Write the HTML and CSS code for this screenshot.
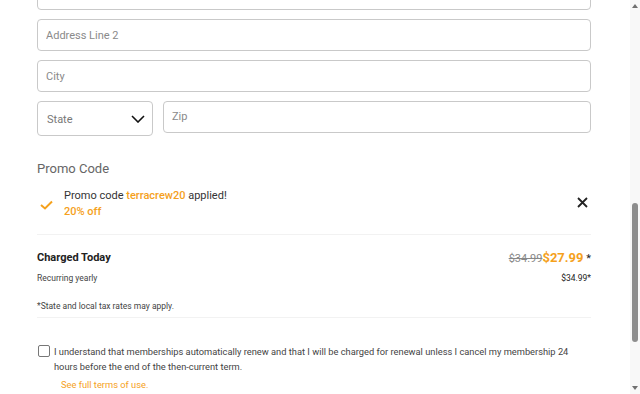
FILE: index.html
```html
<!DOCTYPE html>
<html lang="en">
<head>
    <meta charset="UTF-8">
    <meta name="viewport" content="width=device-width, initial-scale=1.0">
    <title>Checkout</title>
    <link rel="stylesheet" href="styles.css">
</head>
<body>
    <div id="page">
        <div id="checkout-form">
            <div class="field"><input type="text" class="text-input" placeholder="Address Line 1"></div>
            <div class="field"><input type="text" class="text-input" placeholder="Address Line 2"></div>
            <div class="field"><input type="text" class="text-input" placeholder="City"></div>
            <div class="field field-row">
                <div class="state-select">
                    <span>State</span>
                    <svg width="14" height="8" viewBox="0 0 14 8"><path d="M1 1l6 6 6-6" fill="none" stroke="#111" stroke-width="1.6"/></svg>
                </div>
                <input type="text" class="text-input zip-input" placeholder="Zip">
            </div>

            <div class="promo-title">Promo Code</div>
            <div class="promo-applied">
                <svg class="promo-check" width="13" height="10" viewBox="0 0 13 10"><path d="M1 5l4 3.5L12 1.5" fill="none" stroke="#f5a11c" stroke-width="2"/></svg>
                <div class="promo-text">
                    <div>Promo code <span class="accent">terracrew20</span> applied!</div>
                    <div class="accent">20% off</div>
                </div>
                <svg class="promo-remove" width="11" height="11" viewBox="0 0 11 11"><path d="M1 1l9 9M10 1l-9 9" fill="none" stroke="#222" stroke-width="1.8"/></svg>
            </div>

            <div class="summary">
                <div class="summary-row">
                    <div class="charged-title">Charged Today</div>
                    <div class="price"><span class="old-price">$34.99</span><span class="new-price">$27.99</span> *</div>
                </div>
                <div class="summary-row small-row">
                    <div>Recurring yearly</div>
                    <div class="renew-price">$34.99*</div>
                </div>
                <div class="tax-note">*State and local tax rates may apply.</div>
            </div>

            <div class="terms">
                <span class="checkbox"></span>
                <div class="terms-text">
                    I understand that memberships automatically renew and that I will be charged for renewal unless I cancel my membership 24 hours before the end of the then-current term.
                    <div class="terms-link">See full terms of use.</div>
                </div>
            </div>
        </div>
        <div id="scrollbar">
            <span class="arrow-up"></span>
            <span class="thumb"></span>
            <span class="arrow-down"></span>
        </div>
    </div>
</body>
</html>
```

FILE: styles.css
```css
html, body {
    margin: 0;
    padding: 0;
    height: 100%;
    overflow: hidden;
}
body {
    background-color: white;
    color: #333;
    font-family: Roboto, "Liberation Sans", sans-serif;
}
#page {
    position: relative;
    height: 394px;
    overflow: hidden;
}
#checkout-form {
    width: 554px;
    margin: -22px 0 0 37px;
}
.field {
    margin-bottom: 9px;
}
.field-row {
    display: flex;
    align-items: flex-start;
    gap: 10px;
}
.text-input {
    display: block;
    box-sizing: border-box;
    width: 100%;
    height: 32px;
    border: 1px solid #c9c9c9;
    border-radius: 4px;
    padding: 0 8px;
    font-family: inherit;
    font-size: 11px;
    color: #333;
    outline: none;
}
.text-input::placeholder {
    color: #8a8a8a;
}
.zip-input {
    flex: 1;
    padding-bottom: 1px;
}
.state-select {
    box-sizing: border-box;
    width: 116px;
    height: 35px;
    border: 1px solid #c9c9c9;
    border-radius: 4px;
    padding: 0 7px 0 9px;
    display: flex;
    align-items: center;
    justify-content: space-between;
    font-size: 11px;
    color: #777;
}
.state-select span {
    padding-top: 1px;
}
.promo-title {
    margin-top: 25px;
    font-size: 13px;
    color: #666;
}
.promo-applied {
    display: flex;
    align-items: center;
    padding: 12px 3px 14px 3px;
    border-bottom: 1px solid #f2f2f2;
}
.promo-check {
    margin-right: 11px;
    margin-top: 2px;
}
.promo-text {
    flex: 1;
    font-size: 11px;
    line-height: 16px;
    color: #333;
}
.accent {
    color: #f5a11c;
    font-weight: 500;
}
.promo-remove {
    margin-top: -3px;
}
.summary {
    padding: 15px 0 6px;
    border-bottom: 1px solid #f2f2f2;
}
.summary-row {
    display: flex;
    justify-content: space-between;
    align-items: center;
}
.charged-title {
    font-size: 11px;
    font-weight: 700;
    color: #222;
}
.price {
    font-size: 11px;
    color: #222;
}
.old-price {
    color: #888;
    text-decoration: line-through;
}
.new-price {
    color: #f5a11c;
    font-size: 13px;
    font-weight: 700;
}
.small-row {
    margin-top: 8px;
    font-size: 8.5px;
    color: #444;
}
.renew-price {
    color: #222;
}
.tax-note {
    margin-top: 18px;
    font-size: 8.5px;
    color: #444;
}
.terms {
    display: flex;
    align-items: flex-start;
    margin-top: 26px;
}
.checkbox {
    box-sizing: border-box;
    width: 12px;
    height: 12px;
    border: 1px solid #777;
    border-radius: 2px;
    margin: 1px 4px 0 1px;
    flex-shrink: 0;
}
.terms-text {
    padding-right: 8px;
    font-size: 9.3px;
    line-height: 15px;
    color: #444;
}
.terms-link {
    margin: 3px 0 0 7px;
    color: #f5a11c;
}
#scrollbar {
    position: absolute;
    top: 0;
    right: 0;
    width: 10px;
    height: 394px;
    background-color: #f8f8f8;
}
.thumb {
    position: absolute;
    top: 203px;
    left: 2px;
    width: 6px;
    height: 139px;
    border-radius: 3px;
    background-color: #8d8d8d;
}
.arrow-up, .arrow-down {
    position: absolute;
    left: 2px;
    width: 0;
    height: 0;
    border-left: 3px solid transparent;
    border-right: 3px solid transparent;
}
.arrow-up {
    top: 4px;
    border-bottom: 4px solid #707070;
}
.arrow-down {
    bottom: 4px;
    border-top: 4px solid #707070;
}
```
